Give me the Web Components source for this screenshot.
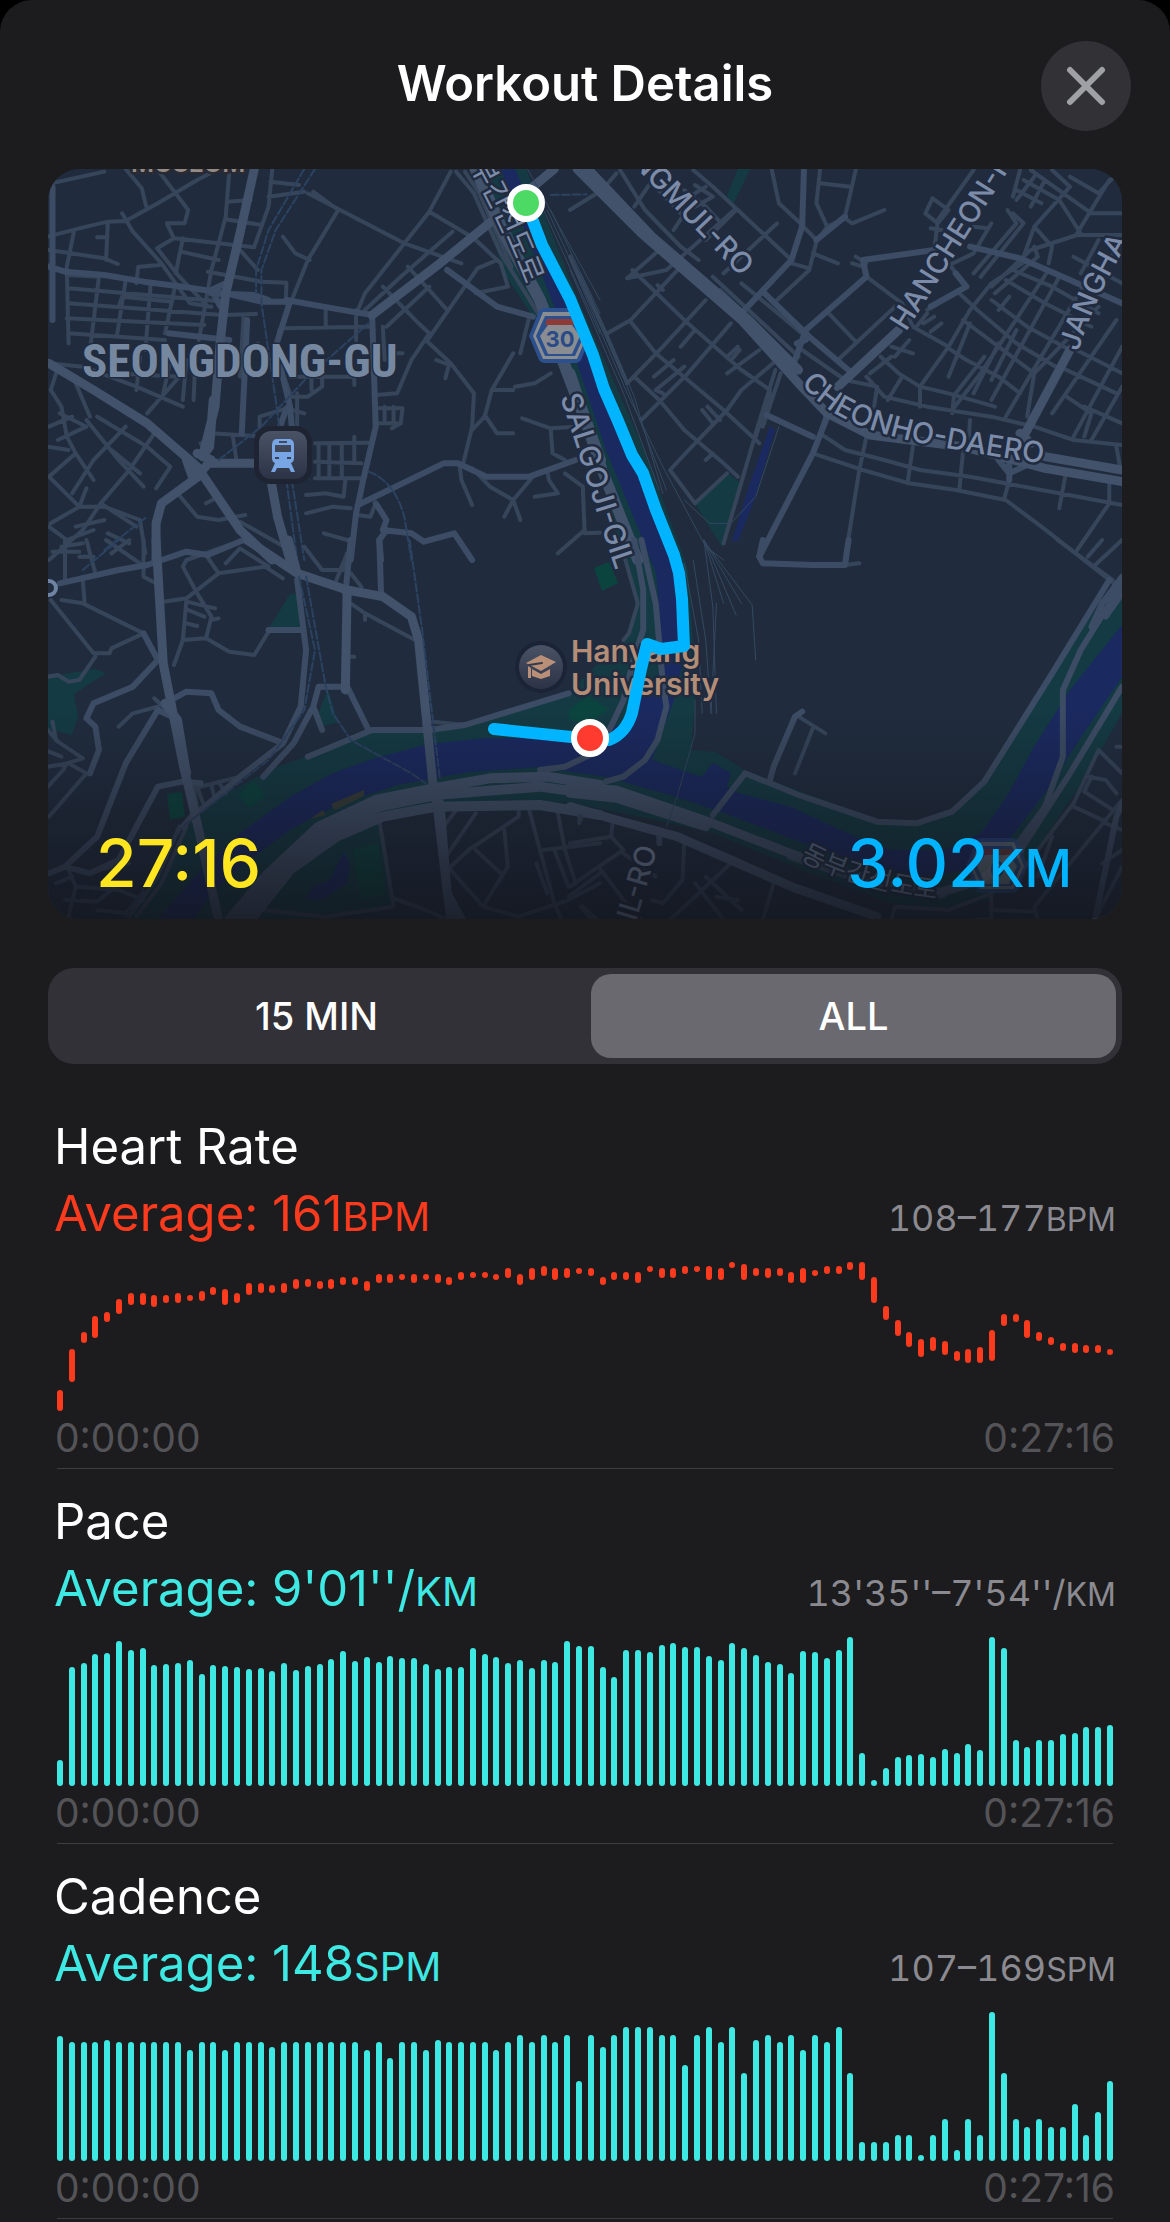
<!DOCTYPE html>
<html lang="en">
<head>
<meta charset="utf-8">
<meta name="viewport" content="width=device-width, initial-scale=1">
<title>Workout Details</title>
<style>
  html { background: #000; }
  body { margin: 0; color: #fff; font-family: Inter, Roboto, "Noto Sans CJK KR", sans-serif; }
</style>
</head>
<body>
<workout-sheet>
  <sheet-header slot="header">Workout Details</sheet-header>
  <route-map duration="27:16" distance="3.02" unit="KM"></route-map>
  <range-switch></range-switch>
  <metric-section name="Heart Rate" average="161" unit="BPM" range="108–177" kind="heart" style="--tint:#fb3a1e"></metric-section>
  <metric-section name="Pace" average="9'01''/" unit="KM" range="13'35''–7'54''/" kind="pace" style="--tint:#3ee8e3"></metric-section>
  <metric-section name="Cadence" average="148" unit="SPM" range="107–169" kind="cadence" style="--tint:#3ee8e3"></metric-section>
</workout-sheet>

<template id="map-template">
<style>
  :host { display: block; position: relative; border-radius: 32px; overflow: hidden; background: #202c3e; }
  svg { display: block; width: 100%; height: auto; }
  .stats { position: absolute; left: 0; right: 0; bottom: 0; display: flex; justify-content: space-between; align-items: baseline; padding: 0 50px 16px 48px; font-size: 66px; line-height: 80px; font-weight: 500; }
  .time { color: #ffe620; }
  .dist { color: #00b4ff; }
  .dist small { font-size: 52px; line-height: 1; }
  path { fill: none; stroke-linejoin: round; stroke-linecap: round; }
  .g path { vector-effect: non-scaling-stroke; }
  .n { stroke: #36455a; stroke-width: 4; }
  .m { stroke: #3c4c64; stroke-width: 6; }
  .w { stroke: #42526b; stroke-width: 9; }
  .r { stroke: #2c4261; stroke-width: 2; stroke-dasharray: 8 3; }
  .r2 { stroke: #33485f; stroke-width: 1; }
  .park { fill: #143a43; }
  .green { fill: #0b443f; }
  .water { fill: #1a2960; }
  text { font-family: Inter, "Noto Sans CJK KR", sans-serif; fill: #7c8ca8; stroke: #202b40; stroke-width: 5; paint-order: stroke; stroke-linejoin: round; }
  .road { font-size: 29px; font-weight: 500; }
</style>
<svg viewBox="0 0 1074 750" role="img" aria-label="Route map">
  <defs>
    <path id="p1" d="M568-22L712 128"/>
    <path id="p2" d="M858 163L988-42"/>
    <path id="p3" d="M1030 183Q1050 120 1092 54"/>
    <path id="p4" d="M753 214C790 262 850 274 1020 298"/>
    <path id="p5" d="M512 228C531 282 545 335 570 408"/>
    <path id="p6" d="M588 753L618 650"/>
    <path id="p7" d="M408-28Q455 52 486 138"/>
    <path id="p8" d="M752 690Q810 722 895 731"/>
    <linearGradient id="fade" x1="0" y1="0" x2="0" y2="1"><stop offset="0" stop-color="#14161f" stop-opacity="0"/><stop offset="1" stop-color="#12141c" stop-opacity=".78"/></linearGradient>
    <linearGradient id="pin" x1="0" y1="0" x2="0" y2="1"><stop offset="0" stop-color="#4a5266"/><stop offset="1" stop-color="#2c3346"/></linearGradient>
  </defs>
  <rect width="1074" height="750" fill="#202c3e"/>
  <!-- parks and river -->
  <path class="park" d="M81 751L124 691 149 641 221 601 324 563 413 556 521 524 543 501 576 471 588 438 577 391 522 204 456 104 424 0H478L530 130 600 290 640 400 645 471 647 528 643 581 668 583 701 604 722 611 829 651 868 654 904 643 936 613 1004 501 1074 404V544L1036 611 986 684 943 731 901 741 843 734 754 701 665 664 593 648 522 634 456 631 385 638 331 644 346 738 278 751Z"/>
  <path class="park" d="M-1 507L16 505 46 500 58 504 26 525 30 548 24 566 -1 560ZM221 459L242 425 250 425 252 459ZM268 550L280 520 290 553 276 557ZM648 336L678 303 694 315 674 378ZM679 26L690 0H702L684 38Z"/>
  <path class="water" d="M110 751L146 708 192 664 242 628 285 604 331 588 381 575 438 569 492 569 550 567 586 548 593 524 611 504 613 481 611 438 608 404 595 371 558 281 529 194 492 101 453 0H467L540 170 600 310 629 384 638 438 638 478 626 531 611 571 604 591 633 601 654 608 665 594 683 604 679 618 690 624 743 638 808 668 843 681 897 681 933 664 961 624 986 578 1022 521 1074 456V508L1033 568 997 624 961 671 933 698 879 708 826 698 765 678 676 644 629 628 558 608 492 598 421 603 349 616 285 638 242 661 192 698 163 724 146 751ZM722 257L727 261 706 332 690 372 684 372 700 320ZM287 700L296 683 302 695 299 714 280 727 274 731 257 730 266 717 281 712Z"/>
  <path class="green" d="M546 399L561 393 570 414 554 422ZM119 625L134 623 137 648 122 651ZM190 626L206 612 218 627 201 639ZM522 540L540 527 560 540 540 556 520 550ZM305 680L330 675 338 725 312 730Z"/>
  <path style="fill:#383f39" d="M283 635L316 621V627L287 641ZM262 650L275 641 278 646Z"/>
  <!-- north-west quarter -->
  <g class="g" transform="translate(-8 -9) scale(.357143 .333333)">
    <path class="n" d="M20 230L110 205 190 185 240 183 330 130 440 60 500 27M22 72L180 35M240 27L285 85 297 138M330 30L415 150 405 190 355 190 375 235 328 265 390 350 470 440M230 160L260 215 340 310 420 430 480 440M95 215L75 320 80 550M190 185L185 300M160 232H188M25 270L180 295 218 312M375 235L600 262M395 275L500 300M400 235L380 340M278 320L335 315M275 320L270 370M530 35L520 170 480 330 455 480 445 540M525 125L590 120M520 178L620 195M470 335L620 365 690 368 688 430M75 345L165 350 140 570M240 360L215 530M310 370L295 570M378 380L350 520M80 385L520 425M80 430L510 465 605 462M75 475L460 495M80 520L350 540M220 440L230 410 370 425M650 30L640 140 600 260M640 110L740 95M645 65L725 75M560 270L610 330M750 100L1020 250 1180 310M835 150L750 300 705 420M835 150L765 95M680 230L715 280 755 300M1150 35L1090 155 910 400 890 450M1090 155L1215 235 1290 310 1310 380 1220 400M1165 35L1215 100 1290 280 1400 470M1190 35L1230 100 1320 320M1155 215L1010 350 900 460M1030 320L1090 390 1140 450M960 380L1060 490 1090 520 1040 600M1280 300L1225 325 1085 540M680 505L920 500M800 450V500M885 450V540M970 500L1090 380M670 510L660 580 700 700M570 470L560 650M610 550L640 600M960 500L965 600M990 580H1015M1040 600L1000 700 940 705M1085 545L1150 610 1215 700 1210 800 1185 910M1430 640L1385 670 1330 680M1325 690L1265 690 1325 580M1265 690L1245 770 1210 810M1245 765L1280 820H1325M1350 775L1430 805 1500 800M1430 805L1435 880 1470 900M1110 600L1145 615 1135 655M1345 580L1370 470M940 745H1015L1010 790 985 805M940 790H1000M965 740V790M990 740V790M45 640L30 690 60 740 75 830 100 880 25 950M100 670L140 770M25 610L120 620 270 680 400 740M210 640L390 650 300 760M280 590L270 690M370 580L345 700M410 600L400 720M435 600L430 720M160 770L300 860 365 920 325 985M130 780L220 900 290 980M55 760L130 800 50 840M25 800L90 770M240 800L150 900 90 1000M320 820L250 930 170 1030 120 1110 25 1200M200 870L280 940M100 880L150 960M25 950L110 1040 180 1040 280 1080 295 1180M170 1030L270 1100M25 1100L75 1140 150 1110M100 1100L180 1080M60 1160L120 1150M190 1120L250 1150M700 710H750L790 680V650M700 650H880V675M760 650V690M770 850L920 848M770 905L900 910M770 955H900M780 850V950M810 850V950M845 850V950M880 830V905M745 1005L800 1000 850 1010 855 960M745 1060L820 1040 870 1045M480 820L600 828M540 830L550 900M615 800L615 770 690 745 740 760M720 700V800M385 1000L440 1070 500 1080 575 1065M560 1085L700 1170M465 1030L500 1010M1175 920L1180 960 1210 1035M1210 925L1260 980 1325 1020 1300 1070M1325 1020L1345 1080M1325 1020L1380 950M1420 930L1425 960 1450 1000 1385 1010M1470 940L1520 980 1525 1120 1568 1118M1525 1110L1450 1180M890 1065L925 1070 940 1030M20 860L80 870M30 1090L110 1040 130 985M480 900L450 850M795 1120L860 1140"/>
    <path class="m" d="M35 80V480M25 320L70 335 180 345 290 365 400 380 520 400 620 425 700 425M480 400L600 405 640 420M520 370L480 390 505 440M700 425L660 560 700 740 705 800M690 420L820 445 930 465M930 465L940 800 905 960 885 1060 870 1200M1140 330L1280 440 1380 470M1170 910L1130 910 890 1035M1170 910L1250 950H1370L1500 900M940 1030L970 1080 960 1110 1040 1120 1075 1145 1160 1120 1210 1200M970 1110L950 1140 955 1200M360 520L530 540M580 480L565 820M690 745L640 900M1280 170L1400 430 1450 520"/>
    <path class="w" d="M600 27L560 220 520 400 505 540 490 740 455 890M930 465L1120 310 1280 170 1440 27M25 610L150 690 300 790 440 920 560 1110 650 1200M470 910H610M455 940L340 1030 325 1090V1200M645 950L665 1070 700 1200M455 890L475 860 485 720M410 900L430 960 480 900 440 880"/>
    <path class="w" style="stroke-width:12" d="M1220 27L1290 200 1400 420 1520 760 1568 900"/>
    <path class="r" d="M770 27L660 210 620 330 620 430 660 720 670 800M740 27L640 210 605 330 605 400M690 960L720 1200M705 960L740 1200M500 900L620 800 750 650 920 490M920 935C960 950 1000 990 1020 1070L1040 1200M180 1170L300 1070M1430 105L1530 103"/>
    <path class="r2" d="M1410 150L1568 520M1420 150L1568 490M1430 150L1568 460M1365 27L1568 420"/>
  </g>
  <!-- north-east quarter -->
  <g class="g" transform="translate(522 -9) scale(.357143 .333333)">
    <path class="n" d="M90 90L130 40M140 30L210 150 310 260 360 300M230 70L310 160M320 90L380 140 415 180M350 75L400 110 350 140M320 120L380 80M345 30L400 80 620 300M465 150L380 240M580 190L430 340M460 150L270 330 160 355M250 30L180 140M290 210L340 130M175 330L330 490 480 630 560 690M250 270L160 355M245 375L260 390M310 320L170 480 105 520M170 485L240 580 430 750 530 850M380 420L260 560 160 670M450 490L330 640 200 780M530 570L440 640M590 590L480 690 440 750 350 850 280 930 350 1030 440 940M180 650L250 720 320 810 430 910 470 950M235 650L290 600M240 690L320 620M240 690L260 700M310 560L350 510M440 590L470 560M455 595L475 570M370 750L400 790M385 740L420 780M380 900L400 880M480 370L650 520M420 390L620 600M500 450L560 510 640 590M400 350L520 470M570 430L670 330 690 245 720 200M620 310L670 325M680 280L750 310M700 30L690 130 720 200 770 175 790 190 880 150M700 70L785 80M800 30L770 170M565 30L585 130 645 190 690 240M720 455L800 545M800 290L830 310M790 310L820 320M830 350L930 430 960 500 1060 560M750 600L910 440M995 350L1130 280 1180 190M1020 270L1030 180 1130 30M1015 115L1060 150 1030 190 995 160 1015 115M1130 200L1170 205M1010 205L1040 210M1000 450L1110 380M970 500L1000 460M1010 515L1040 490M990 490L1020 470M900 560L960 580M910 590L950 540M870 590L920 640 980 680 1060 700 1190 740M840 640L900 590M830 650L880 710 1000 740 1180 770 1300 800 1410 840 1546 855M650 570L770 660 860 680 850 750M890 720L930 650M980 680V740M1075 710L1070 760M1060 560L1120 450 1180 370 1280 300M1060 565L1110 600 1200 650 1260 700M1090 400L1140 450 1250 550 1360 620M1100 480L1200 560 1300 640M1060 560L980 680M1130 340L1250 190 1225 150M1150 350L1270 190 1240 160M1180 380L1290 270 1420 225 1546 225M1190 400L1310 290 1300 260M1240 330L1350 380 1480 460M1220 360L1330 430 1460 500M1230 410L1200 450M1180 420L1280 500 1400 570M1290 30L1460 160 1546 160M1270 60L1370 120 1430 220M1250 90L1320 130M1350 30L1400 80 1300 200 1270 290M1400 50L1480 100 1540 30M1510 60L1420 220M1260 30L1240 110M1300 50L1250 120M1330 60L1290 140M1300 200L1350 260 1340 310M1480 240L1430 340M1410 290L1546 370M1546 250L1500 310M1370 350L1180 720M1340 330L1150 640 1070 750M1430 390L1220 770M1480 440L1300 640 1280 770M1530 480L1350 760M1546 560L1410 830M1546 680L1460 840M1370 620L1530 700M1400 560L1546 640M1390 710L1460 760 1440 830M1440 740L1546 790M1120 490L1060 650M1160 590L1080 700M1200 550L1130 700M1250 510L1180 660M1110 380L1060 310M560 700L520 830M575 630L520 820 430 1150M590 640L540 800M715 770L690 860 680 880 820 930 950 970 1080 990 1220 1020 1320 1100 1546 1290M700 820L770 870 880 900 980 930 1120 950 1370 1000 1546 1035M830 830L810 930 770 1200M960 860L945 970M1100 880L1090 990M1120 780L1115 860M1230 960L1215 1020M1390 930L1370 1045M1510 970V1020M1510 1030L1420 1170M1530 860L1540 920M0 150L90 90M100 520L0 290M160 670L100 520"/>
    <path class="m" d="M655 30L650 200 620 300 480 460M660 510L830 350 820 300 1020 270M540 395L670 530 790 640M660 510L630 600M660 540L635 550M690 240L770 170M550 765L680 830M720 770L680 880 530 1190M1080 340L1110 380 1010 440M1120 260L1260 295 1400 360 1546 430M1200 900L1230 940 1290 910M1230 890V960"/>
    <path class="w" d="M20 27L200 220 480 480 640 670 720 760 840 825 1100 860 1330 925 1546 965M50 27L230 230 500 480 640 630M750 680L920 510M1400 570L1340 690 1270 830M1330 890L1546 930M1260 820L1290 850"/>
    <path class="r2" d="M0 300L160 700 260 920 380 1160 430 1200M20 330L160 680 270 990M0 330L150 700 250 990M30 340L180 710 260 1000M585 800L520 1010 450 1090 390 1090 320 1020"/>
    <path class="w" style="stroke-width:11" d="M0 640L90 930 190 1200"/>
  </g>
  <!-- south-west quarter -->
  <g class="g" transform="translate(-8 371) scale(.357143 .333333)">
    <path class="n" d="M30 180L150 340 195 340 200 325 290 280M60 180L120 190 290 280M155 350L110 420 80 425 50 405 22 410M70 0V120M35 35H110M130 0L155 100M110 50H150M185 0L280 70M250 0L200 40M290 0V110L325 130M120 120L125 190M345 185L410 175 500 100 630 80 680 115M465 45L500 100M400 80L440 160 480 230 465 295 400 300 375 375M400 80L410 60 570 0M410 180L400 300M410 185L490 205M415 210L460 230M410 250L440 258M480 240L500 235M465 295L530 335 600 345 640 275M520 70L560 25 640 80M740 20L790 90 850 90 870 20M860 40L830 120M870 100L900 140M870 190L910 220 1050 300M910 220V240M870 350H880M1100 545L1190 555M220 560L260 520 330 500M320 475L345 500M22 680L80 670 130 700 25 830M22 570L50 605 120 655M35 545L45 600M120 655L75 670 65 690 22 740M25 635L60 650M450 740L560 710M440 740L460 800M480 735L490 780M500 725L520 760M430 740L440 800M390 860L330 1010 250 1130M410 860L340 1030 270 1130M80 990L100 1040 220 1050 290 1080M100 1040L80 1130M70 1080L160 1085 210 1040M160 1110L240 1120 290 1060M45 1030L90 1010M145 995L250 970M620 1110L800 1130 990 1100 950 840M990 1075L1080 1110 1140 1139M1220 820L1130 960 1150 990 1240 1100 1340 1130 1480 1080 1568 1030M1340 800L1340 830 1200 930 1150 980M1300 870L1310 980 1240 1100M1220 930L1290 1000M1370 810L1400 930 1440 1090 1460 1139M1450 820L1470 930 1500 1030M1510 830V850M1410 930L1568 910M1390 970L1420 1060M1480 1070L1568 1000M1520 1100L1560 1139M1180 790L1130 860M1440 930L1480 1040"/>
    <path class="m" d="M55 130L220 90 300 75 410 35 470 45 570 0M290 280L330 360 260 440 150 490 130 535 155 560 165 630 140 700M350 490L410 455 480 460 500 510 560 560 670 605M330 510L240 670 160 890 70 980 25 1000M70 980L140 1000 220 960 330 740 400 725 450 730M860 440H780L765 500 790 570M750 650L930 570H1090L1190 555 1480 460M720 120L745 330 730 500 680 610 560 710 450 810M760 510L710 610 625 710M640 270H735M860 440L920 570M950 0L955 160M870 0L855 160M330 510L370 530 415 700M440 810L400 860M1400 690L1470 680 1550 640"/>
    <path class="w" d="M325 0L345 370 400 670 440 850 500 1139M580 0L720 100 860 150 960 170 1040 230 1060 300 1100 730M695 0L720 100M860 150L855 450M350 490L385 540 410 700M1110 780L1150 1139M1120 790L1140 1060 1180 1139"/>
    <path class="w" style="stroke-width:10" d="M530 1139L640 1000 780 860 940 780 1100 745 1260 715 1420 710 1568 735M555 1139L660 1010 800 880 950 800 1110 765 1400 740 1568 765M590 1139L700 990 830 890 960 830 1110 800 1400 795 1568 825"/>
    <path class="r" d="M725 110L770 330 740 510 640 660 400 860 240 1130M745 110L800 440 820 520 870 600 1040 700 1080 730M1035 0L1070 270 1120 720M120 90L220 0"/>
  </g>
  <!-- south-east quarter -->
  <g class="g" transform="translate(522 371) scale(.357143 .333333)">
    <path class="n" d="M1365 0L1520 120M1450 50L1490 0M1465 80L1546 0M680 565L630 700M640 530L715 580M120 840L115 890 0 910M115 890L150 930 80 980 0 1040M80 980L150 1080 200 1139M150 940L240 1010M320 905L315 1020 260 1090 230 1080M450 970L350 1070 280 1139M350 1030L430 1139M380 1010L480 1110M410 1070L470 1080M570 1030L540 1139M30 1100L60 1139M30 820V840M1480 630L1546 700M1480 630L1410 790 1260 1000M1450 710L1500 720 1530 760M1440 755L1520 810M1410 800L1500 845M1440 755L1460 710M1530 620H1546M1350 890L1310 1010M1180 1060V1139H1140M1180 1110L1300 1115M1546 930L1490 970M1310 1139L1300 1100 1546 780M1470 1139L1546 980M900 1139L910 1100 1060 1110 1180 1060M1500 850L1546 870M155 60L190 190 165 280 150 300M770 75L810 70"/>
    <path class="m" d="M540 0L530 50 540 70 680 75H770L780 0M400 825L490 700 560 730 640 765 860 845 970 850 1070 815 1160 725 1350 400 1510 120M560 720L570 680 630 530 650 515M1546 130L1430 330 1380 450V650L1330 800 1240 930M1546 160L1500 230M200 0L240 190 260 430 270 500 245 600 210 660 150 710 100 725M180 0L205 150 205 270 180 350 150 480 110 570M1546 440L1400 700 1250 950M1546 110L1490 190 1460 260M250 880V910M1546 790L1530 830 1470 1139"/>
    <path class="w" d="M0 740L130 750 400 850 640 950M0 760L130 775 380 860M0 800L130 840 300 890 450 960 620 1040 860 1130M1030 1060L1150 1020 1260 930"/>
    <path class="w" style="stroke-width:11;opacity:.75" d="M620 945L860 1030 1040 1060"/>
    <path class="r2" d="M320 70L360 300 370 520M345 60L380 300 395 520M375 0L400 200 410 520M375 0L430 190M380 10L465 225M380 10L510 195 520 360M375 0L480 190M410 190L395 520M350 480L350 580 300 770 270 860"/>
  </g>
  <circle cx="1" cy="419" r="7" fill="none" stroke="#6f83a3" stroke-width="4"/>
  <!-- labels -->
  <text x="83" y="3" font-size="25" font-weight="600" style="fill:#948b87;stroke:#2a2a33">MUSEUM</text>
  <text x="34" y="208" style="font:700 47px 'Liberation Sans Narrow','Roboto Condensed','DejaVu Sans Condensed',sans-serif;fill:#75889f;stroke-width:3">SEONGDONG-GU</text>
  <text class="road"><textPath href="#p1">ANGMUL-RO</textPath></text>
  <text class="road"><textPath href="#p2">HANCHEON-R</textPath></text>
  <text class="road"><textPath href="#p3">JANGHA</textPath></text>
  <text class="road"><textPath href="#p4">CHEONHO-DAERO</textPath></text>
  <text class="road"><textPath href="#p5">SALGOJI-GIL</textPath></text>
  <text class="road"><textPath href="#p6">IL-RO</textPath></text>
  <text font-size="29"><textPath href="#p7">동부간선도로</textPath></text>
  <text font-size="26" opacity=".8"><textPath href="#p8">동부간선도로</textPath></text>
  <text font-size="30" font-weight="600" style="fill:#b48d76"><tspan x="523" y="493">Hanyang</tspan><tspan x="523" y="526">University</tspan></text>
  <!-- university pin -->
  <circle cx="493" cy="498" r="26" fill="#1b2436"/><circle cx="493" cy="498" r="22" fill="url(#pin)"/>
  <path style="fill:#b98f78" d="M478 494L493 486 508 493 493 502ZM484 500L493 505 502 500V507L493 510 484 507ZM480 497L483 499V509H480Z"/>
  <path stroke="#333a4c" stroke-width="2" d="M481 496L494 494"/>
  <!-- station pin -->
  <rect x="206" y="257" width="58" height="58" rx="16" fill="#1e2432"/><rect x="211" y="262" width="48" height="48" rx="12" fill="url(#pin)"/>
  <path fill-rule="evenodd" style="fill:#78a5e3" d="M228 270H242Q246 271 246 276V289Q246 293 243 294L247 303H243L241 299H229L227 303H223L227 294Q224 293 224 289V276Q224 271 228 270ZM227 276V283H243V276ZM231 272V274H239V272ZM227 288V290H231V288ZM239 288V290H243V288Z"/>
  <!-- expressway shields -->
  <g id="shield"><path style="fill:#2c4f8d" d="M481 167L491 142Q493 139 497 139H527Q531 139 533 142L543 167 533 191Q531 194 527 194H497Q493 194 491 191Z"/><path style="fill:#898d92" d="M485 167L495 143H529L539 167 529 190H495Z"/><path style="fill:#2c4f8d" d="M488 167L497 147H527L536 167 527 187H497Z"/><path style="fill:#898d92" d="M492 167L500 156H524L532 167 524 185H500Z"/><path style="fill:#8e3a38" d="M499 150H526L528 156H497Z"/></g>
  <text x="512" y="178" font-size="22" font-weight="700" text-anchor="middle" style="fill:#294a86;stroke:none">30</text>
  <g opacity=".65"><use href="#shield" x="437" y="530"/><text x="949" y="708" font-size="22" font-weight="700" text-anchor="middle" style="fill:#294a86;stroke:none">6</text></g>
  <rect y="540" width="1074" height="210" fill="url(#fade)"/>
  <!-- recorded route -->
  <path stroke="#00b4ff" stroke-width="12" d="M478 34L494 76 522 130 545 186 556 220 570 252 584 286 595 304 608 341 626 386 631 404 634 430 636 477 613 480 599 475 593 500 584 544Q578 564 561 571L543 570 446 560"/>
  <circle cx="478" cy="34" r="16" fill="#4cd964" stroke="#fff" stroke-width="6"/>
  <circle cx="542" cy="569" r="16" fill="#ff3b30" stroke="#fff" stroke-width="6"/>
</svg>
<div class="stats"><span class="time"></span><span class="dist"></span></div>
</template>

<script>
const root = (el, html) => { const r = el.attachShadow({ mode: "open" }); r.innerHTML = html; return r; };

customElements.define("workout-sheet", class extends HTMLElement {
  constructor() {
    super();
    root(this, `<style>
      :host { display: block; box-sizing: border-box; min-height: 100vh; background: #1c1c1e; border-radius: 32px 32px 0 0; }
      main { display: flex; flex-direction: column; }
      ::slotted(route-map) { margin: 0 48px; }
      ::slotted(range-switch) { margin: 49px 48px 30px; }
    </style><slot name="header"></slot><main><slot></slot></main>`);
  }
});

customElements.define("sheet-header", class extends HTMLElement {
  constructor() {
    super();
    root(this, `<style>
      :host { display: grid; grid-template-columns: 90px 1fr 90px; align-items: start; padding: 41px 39px 38px; }
      h1 { grid-column: 2; margin: 0; text-align: center; font-size: 49px; line-height: 86px; font-weight: 600; }
      button { width: 90px; height: 90px; padding: 0; border: 0; border-radius: 50%; background: #323236; display: grid; place-items: center; }
      path { stroke: #a0a0a7; stroke-width: 6; stroke-linecap: round; }
    </style><h1><slot></slot></h1>
    <button type="button" aria-label="Close"><svg width="40" height="40" viewBox="0 0 40 40"><path d="M4 4L36 36M36 4L4 36"/></svg></button>`);
  }
});

customElements.define("route-map", class extends HTMLElement {
  constructor() {
    super();
    const r = this.attachShadow({ mode: "open" });
    r.append(document.getElementById("map-template").content.cloneNode(true));
    r.querySelector(".time").textContent = this.getAttribute("duration");
    r.querySelector(".dist").innerHTML = `${this.getAttribute("distance")}<small>${this.getAttribute("unit")}</small>`;
  }
});

customElements.define("range-switch", class extends HTMLElement {
  constructor() {
    super();
    const r = root(this, `<style>
      :host { display: grid; grid-template-columns: 1fr 1fr; border-radius: 26px; background: #323137; }
      button { margin: 6px; height: 84px; padding: 0; border: 0; border-radius: 20px; background: none; color: #fff; font: 500 38px Inter, sans-serif; }
      button[aria-pressed="true"] { background: #6a696f; }
    </style><button type="button" aria-pressed="false">15 MIN</button><button type="button" aria-pressed="true">ALL</button>`);
    const buttons = [...r.querySelectorAll("button")];
    buttons.forEach(b => b.addEventListener("click", () => buttons.forEach(o => o.setAttribute("aria-pressed", o === b))));
  }
});

const SERIES = {
  /* beats per minute: highest and lowest in each slice of the workout */
  heart: "115-108 135-122 143-141 151-143 153-151 159-155 162-159 162-159 161-158 161-160 162-160 161-161 163-161 165-164 164-159 162-160 167-164 167-165 166-165 167-165 169-167 169-168 168-167 169-167 170-169 170-169 168-166 171-170 171-170 171-171 171-170 171-171 171-170 170-169 172-171 172-172 172-172 171-171 174-172 171-169 174-171 175-173 174-171 174-172 174-174 174-173 170-169 172-171 172-171 172-170 175-175 174-172 174-172 175-174 175-175 175-171 174-171 177-177 176-171 174-173 174-172 174-173 172-170 174-170 173-173 175-174 175-174 177-176 177-171 170-160 156-152 149-144 143-139 140-134 141-137 139-135 134-132 135-131 136-131 144-132 152-149 152-151 149-143 143-142 141-140 138-137 138-136 137-136 137-136 135-135",
  pace: "26 119 123 132 133 145 136 138 121 122 123 126 112 121 120 119 117 118 115 123 116 120 122 127 135 125 129 124 130 128 128 122 117 119 119 138 132 129 123 126 118 126 124 145 140 140 119 109 136 136 134 141 143 139 139 130 126 143 138 131 124 122 113 135 134 128 136 149 33 6 18 29 31 32 29 37 33 42 36 149 138 46 39 46 46 52 53 59 59 61",
  cadence: "125 119 119 119 121 119 119 119 119 119 119 111 119 119 111 119 119 119 114 119 119 119 119 119 119 119 111 119 103 119 119 111 121 119 119 119 119 111 119 126 119 126 119 126 80 126 114 126 134 134 134 126 126 96 126 134 119 134 88 121 126 119 126 111 126 119 134 88 19 19 19 26 26 6 26 42 11 42 26 149 88 42 34 42 34 34 57 26 49 80"
};

customElements.define("bar-chart", class extends HTMLElement {
  constructor() { super(); this.attachShadow({ mode: "open" }); }
  connectedCallback() {
    const kind = this.getAttribute("kind");
    const bars = SERIES[kind].split(" ").map(v => {
      if (kind !== "heart") return `<i style="height:${v}px"></i>`;
      const [hi, lo] = v.split("-").map(Number);
      const floor = Math.round((lo - 108) * 143 / 69), top = Math.round((hi - 108) * 143 / 69) + 6;
      return `<i style="height:${top - floor}px;margin-bottom:${floor}px"></i>`;
    }).join("");
    this.shadowRoot.innerHTML = `<style>
      :host { display: flex; justify-content: space-between; align-items: flex-end; height: 150px; }
      i { width: 6px; border-radius: 3px; background: var(--tint); }
    </style>${bars}`;
  }
});

customElements.define("metric-section", class extends HTMLElement {
  constructor() {
    super();
    const a = n => this.getAttribute(n);
    root(this, `<style>
      :host { display: block; padding: 19px 54px 0; }
      h2, p { margin: 0; font-size: 49px; line-height: 67px; font-weight: 400; }
      .row { display: flex; justify-content: space-between; align-items: baseline; }
      .avg { color: var(--tint); }
      small { line-height: 1; }
      .avg small { font-size: 40px; }
      .range { color: #8b8a90; font-size: 36px; line-height: 48px; font-variant-numeric: tabular-nums; }
      .range small { font-size: 32px; }
      bar-chart { margin: 14px 3px 0; }
      .times { display: flex; justify-content: space-between; margin: 0 3px; padding: 4px 0 7px; border-bottom: 1px solid #3d3d40; color: #545458; font-size: 39px; line-height: 46px; }
      .times span { margin: 0 -2px; }
    </style>
    <h2>${a("name")}</h2>
    <div class="row"><p class="avg">Average: ${a("average")}<small>${a("unit")}</small></p><p class="range">${a("range")}<small>${a("unit")}</small></p></div>
    <bar-chart kind="${a("kind")}"></bar-chart>
    <div class="times"><span>0:00:00</span><span>0:27:16</span></div>`);
  }
});
</script>
</body>
</html>
